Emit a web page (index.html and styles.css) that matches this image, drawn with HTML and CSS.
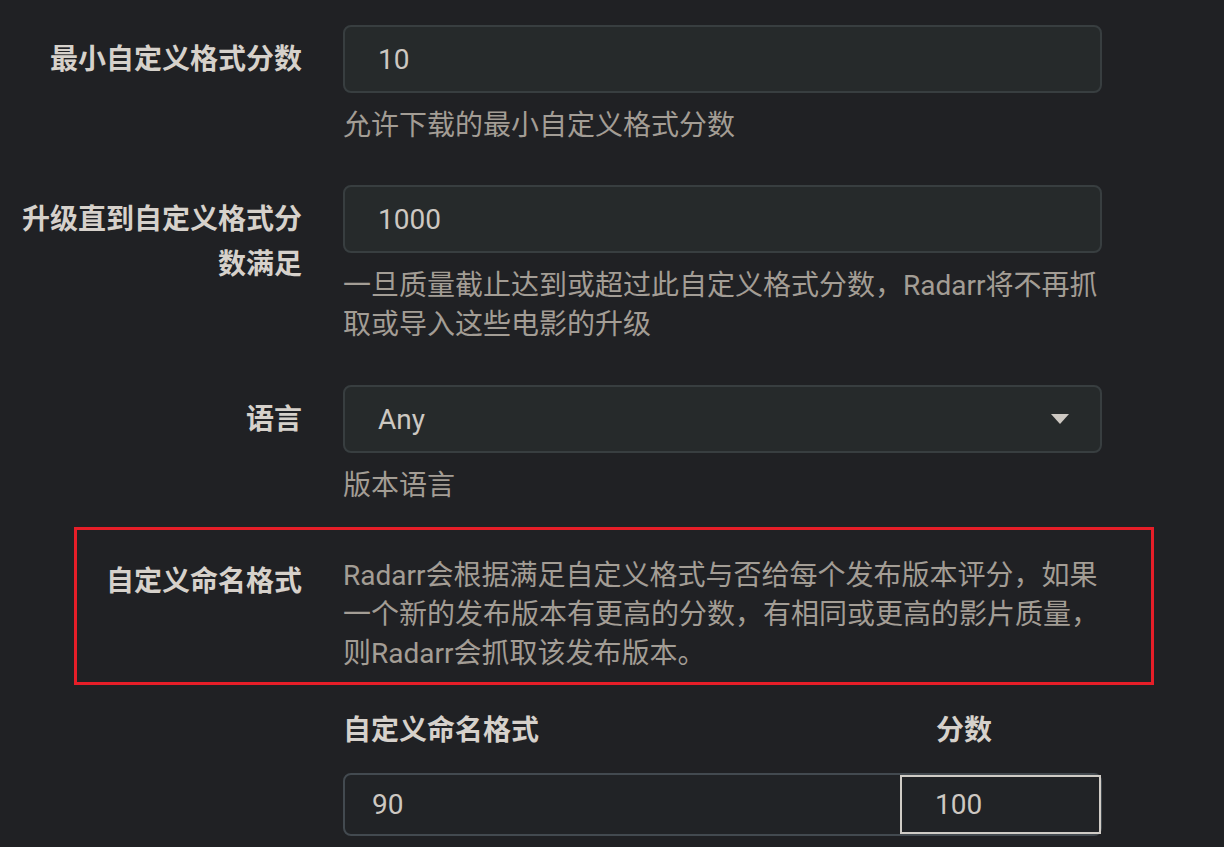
FILE: index.html
```html
<!DOCTYPE html>
<html lang="zh-CN">
<head>
<meta charset="utf-8">
<title>Radarr 设置</title>
<link rel="stylesheet" href="styles.css">
</head>
<body>
<div class="page">
  <div class="form-group">
    <div class="label">最小自定义格式分数</div>
    <div class="field">
      <div class="input">10</div>
      <div class="help">允许下载的最小自定义格式分数</div>
    </div>
  </div>

  <div class="form-group">
    <div class="label">升级直到自定义格式分数满足</div>
    <div class="field">
      <div class="input">1000</div>
      <div class="help">一旦质量截止达到或超过此自定义格式分数，Radarr将不再抓取或导入这些电影的升级</div>
    </div>
  </div>

  <div class="form-group">
    <div class="label">语言</div>
    <div class="field">
      <div class="input select"><span>Any</span><span class="caret"></span></div>
      <div class="help">版本语言</div>
    </div>
  </div>

  <div class="form-group highlight">
    <div class="label">自定义命名格式</div>
    <div class="field">
      <div class="help info">Radarr会根据满足自定义格式与否给每个发布版本评分，如果一个新的发布版本有更高的分数，有相同或更高的影片质量，则Radarr会抓取该发布版本。</div>
    </div>
  </div>

  <div class="formats">
    <div class="formats-head">
      <div class="head-name">自定义命名格式</div>
      <div class="head-score">分数</div>
    </div>
    <div class="format-row">
      <div class="format-name">90</div>
      <div class="format-score">100</div>
    </div>
  </div>
</div>
</body>
</html>
```

FILE: styles.css
```css
html, body {
  margin: 0;
  padding: 0;
  background: #202124;
}

body {
  font-family: "Roboto", "Noto Sans CJK SC", sans-serif;
  font-size: 28px;
  color: #d5d0ca;
}

.page {
  padding-top: 25px;
}

.form-group {
  display: grid;
  grid-template-columns: 302px 759px;
  column-gap: 41px;
  margin-bottom: 40px;
}

.label {
  text-align: right;
  font-weight: 700;
  line-height: 45px;
  padding-top: 12px;
  color: #d6d1cb;
}

.input {
  box-sizing: border-box;
  height: 68px;
  border: 2px solid #383e40;
  border-radius: 8px;
  background: #262a2b;
  padding: 0 33px;
  display: flex;
  align-items: center;
  color: #cdc8c2;
}

.select {
  justify-content: space-between;
  padding-right: 31px;
}

.caret {
  width: 0;
  height: 0;
  border-left: 9px solid transparent;
  border-right: 9px solid transparent;
  border-top: 10px solid #cdc8c2;
}

.help {
  margin-top: 13px;
  line-height: 39px;
  color: #a39d95;
}

.form-group:nth-child(2) {
  margin-bottom: 41px;
}

.form-group:nth-child(3) {
  margin-bottom: 22px;
}

.highlight {
  margin-left: 74px;
  width: 1080px;
  box-sizing: border-box;
  border: 3px solid #e61e28;
  grid-template-columns: 225px 759px;
  padding: 26px 0 9px;
  margin-bottom: 0;
}

.highlight .label {
  padding-top: 3px;
}

.help.info {
  margin-top: 0;
}

.formats {
  margin-left: 343px;
  width: 759px;
  padding-top: 26px;
}

.formats-head {
  display: grid;
  grid-template-columns: 1fr 200px;
  font-weight: 700;
  line-height: 40px;
  color: #d6d1cb;
}

.head-score {
  padding-left: 34px;
}

.format-row {
  margin-top: 22px;
  box-sizing: border-box;
  height: 63px;
  border: 2px solid #434a50;
  border-radius: 8px;
  background: #212326;
  display: grid;
  grid-template-columns: 1fr 200px;
  color: #cdc8c2;
}

.format-name {
  display: flex;
  align-items: center;
  padding-left: 27px;
}

.format-score {
  box-sizing: border-box;
  margin-right: -1px;
  border: 2px solid #d0ccc6;
  display: flex;
  align-items: center;
  padding-left: 33px;
}
```
